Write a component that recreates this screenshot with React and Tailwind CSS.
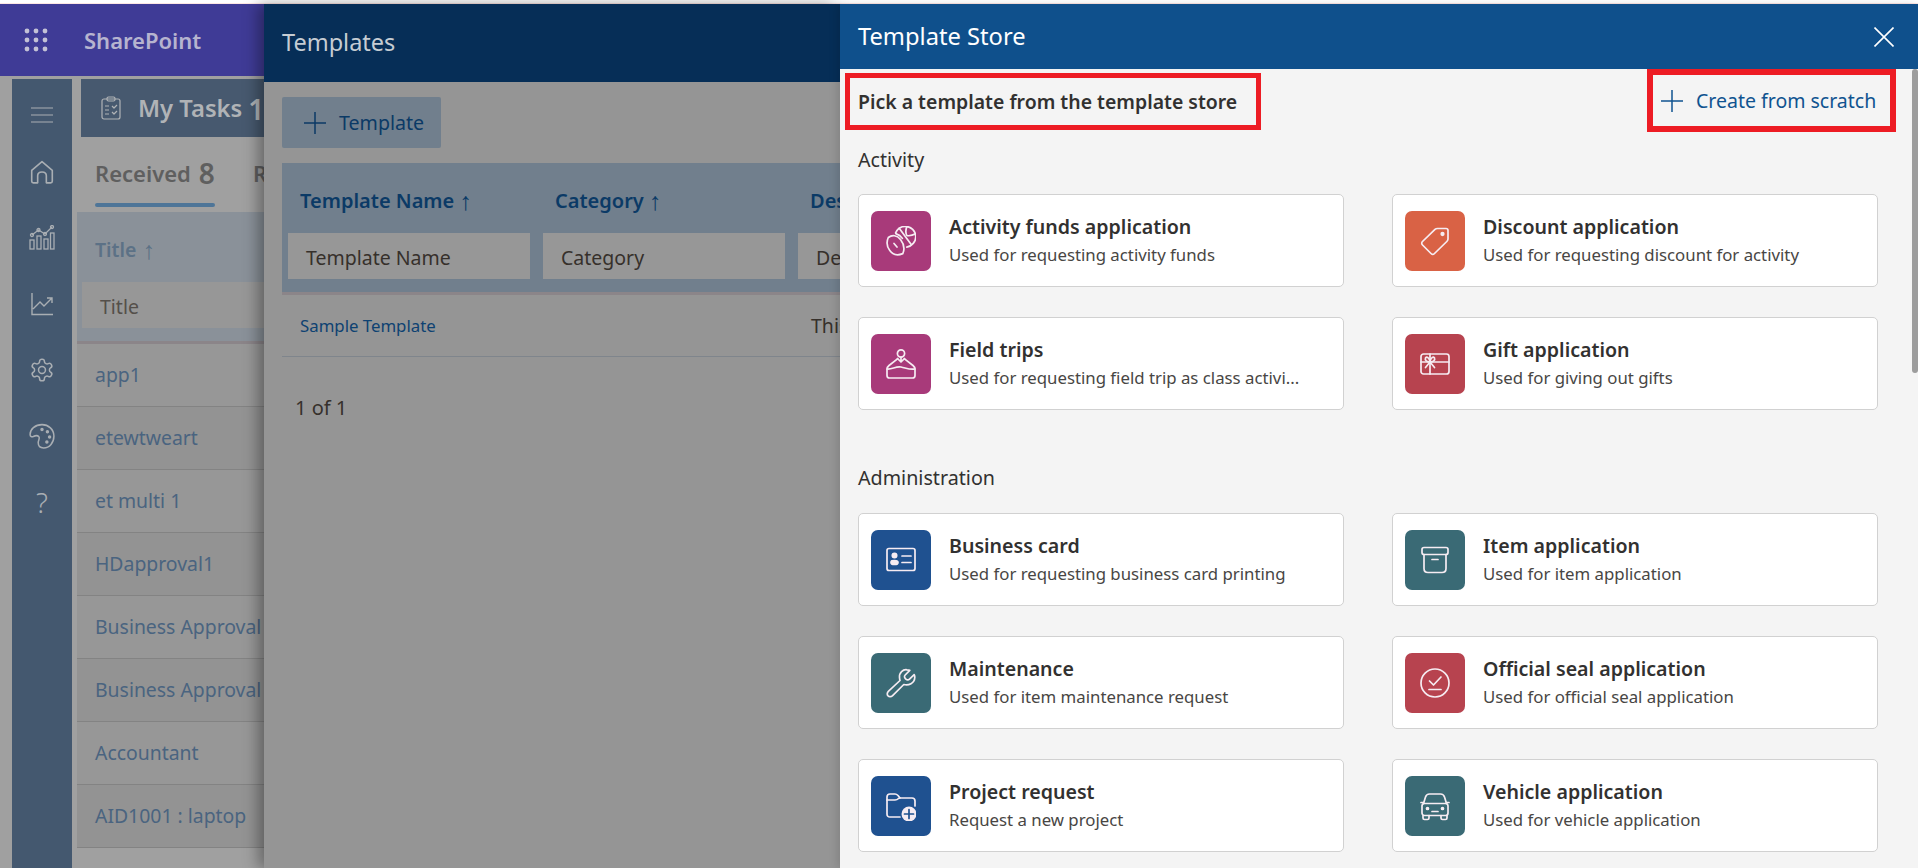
import React from "react";

const S = ({ children, size = 30, vb = "0 0 30 30", sw = 1.7, className = "" }) => (
  <svg width={size} height={size} viewBox={vb} fill="none" stroke="currentColor" strokeWidth={sw} strokeLinecap="round" strokeLinejoin="round" className={className}>
    {children}
  </svg>
);

const icons = {
  sport: (
    <S>
      <path d="M9.6 6.8C11.6 2.8 15.2 .4 19.2 .4C25 .4 29.8 5 29.8 10.8C29.8 15.6 26 20.2 20.8 21.2" />
      <path d="M13.2 2.2L25.4 18.8" />
      <path d="M20.8 .6C19.4 4.4 19.6 7.4 21 9.6C23.6 10 27 9.2 29.4 7.8" />
      <path d="M9.8 7.6C12.6 8.4 15 10.2 16.4 12.4" />
      <path d="M2.3 11.5C6 8.6 11 9 14.5 13.5C18 18 18.6 23.5 16.8 27.6C11.5 29.8 6.6 28.4 3.8 24.5C1 20.8 .5 15.5 2.3 11.5Z" />
      <path d="M8 17.5L11 21" />
    </S>
  ),
  trip: (
    <S>
      <circle cx="15" cy="4.5" r="3.6" />
      <path d="M15 8.2L15 12.5M15 13L11.5 9.5M15 13L18.5 9.5" />
      <path d="M11.5 9.8L3 16.5C1.8 17.5 1 18.5 1 20V26.5C1 28 2 29 3.5 29H26.5C28 29 29 28 29 26.5V20C29 18.5 28.2 17.5 27 16.5L18.5 9.8" />
      <path d="M1.2 20C6 20.5 10 17 15 18C20 19 24 21 28.8 20" />
    </S>
  ),
  tag: (
    <S>
      <path d="M17.5 2.5H26C27 2.5 28 3.5 28 4.5V13C28 14 27.5 14.8 26.8 15.5L14.5 27.5C13.5 28.5 12 28.5 11 27.5L2.5 19C1.5 18 1.5 16.5 2.5 15.5L15 3.3C15.6 2.8 16.5 2.5 17.5 2.5Z" />
      <circle cx="22.5" cy="8" r="1.3" fill="currentColor" />
    </S>
  ),
  gift: (
    <S>
      <rect x="1" y="5" width="28" height="20" rx="2.5" />
      <path d="M1 13H29M10 5V25" />
      <path d="M10 13C7 13 4.5 11.5 5.5 9C6.5 7 9.5 8.5 10 13C10.5 8.5 13.5 7 14.5 9C15.5 11.5 13 13 10 13ZM10 13L5.5 18.5M10 13L14.5 18.5" />
    </S>
  ),
  card: (
    <S>
      <rect x="1" y="3.5" width="28" height="22" rx="2" />
      <circle cx="8.5" cy="10.5" r="2.2" fill="currentColor" />
      <path d="M5 17.5C5 15.8 6 15.5 8.5 15.5C11 15.5 12 15.8 12 17.5C12 19.2 11 19.5 8.5 19.5C6 19.5 5 19.2 5 17.5Z" fill="currentColor" />
      <path d="M16 11H25M16 17.5H25" />
    </S>
  ),
  box: (
    <S>
      <rect x="2" y="2.5" width="26" height="7" rx="2" />
      <path d="M4 9.5V23.5C4 26 5.5 27.5 8 27.5H22C24.5 27.5 26 26 26 23.5V9.5" />
      <path d="M12 14.5H18" />
    </S>
  ),
  wrench: (
    <S>
      <path d="M21 1.8C17 1.2 13 4.5 13.5 9.5C13.6 10.8 13.8 11.8 14 12.5L2.6 23.2C.8 25 1 26.8 2 27.8C3 28.9 5 29.2 6.6 27.6L17.8 16.5C22.5 17.8 28.6 15.4 28.8 9.2C28.8 8.2 28.6 7.4 28.2 6.6L23.5 11.2C22.2 12.4 20.8 12 19.6 10.8C18.4 9.6 18 8.2 19.2 7L23.8 2.4C23 2.1 22 1.9 21 1.8Z" />
    </S>
  ),
  seal: (
    <S>
      <circle cx="15" cy="15" r="14" />
      <path d="M9.5 13L13.5 17L21 9M9 21.5H21" />
    </S>
  ),
  folder: (
    <S>
      <path d="M14 26H4C2 26 1 25 1 23V6C1 4 2 3 4 3H9C10.5 3 11 3.5 12 4.5L14 7H26C28 7 29 8 29 10V15" />
      <path d="M1 9H9C10.5 9 11.5 8.5 12.5 7.5L14 7" />
      <circle cx="23" cy="23" r="7.5" fill="currentColor" stroke="none" />
      <path d="M23 18.5V27.5M18.5 23H27.5" stroke="#1f5190" />
    </S>
  ),
  car: (
    <S>
      <path d="M3.5 12.5L5.5 6C6.2 3.8 7.5 3 9.5 3H20.5C22.5 3 23.8 3.8 24.5 6L26.5 12.5" />
      <rect x="2" y="12.5" width="26" height="12" rx="2.5" />
      <path d="M1 11.5H3.5M26.5 11.5H29M3 24.5V27C3 28 3.5 28.5 4.5 28.5H7.5C8.5 28.5 9 28 9 27V24.5M21 24.5V27C21 28 21.5 28.5 22.5 28.5H25.5C26.5 28.5 27 28 27 27V24.5M12 20.5H18" />
      <circle cx="7.5" cy="17.5" r="1" fill="currentColor" />
      <circle cx="22.5" cy="17.5" r="1" fill="currentColor" />
    </S>
  ),
};

const Card = ({ icon, color, title, sub }) => (
  <div className="h-[93px] flex items-center pl-[12px] bg-white border border-[#d1d1d1] rounded-[5px]">
    <div className={`w-[60px] h-[60px] rounded-[7px] flex items-center justify-center text-[#f6ecf2] ${color}`}>{icons[icon]}</div>
    <div className="ml-[18px] flex flex-col">
      <div className="text-[19.6px] leading-[28px] font-semibold text-[#323130]">{title}</div>
      <div className="text-[16.8px] leading-[28px] text-[#484644]">{sub}</div>
    </div>
  </div>
);

const Grid = ({ children }) => <div className="grid grid-cols-[486px_486px] gap-x-[48px] gap-y-[30px] ml-[18px]">{children}</div>;

const rows = ["app1", "etewtweart", "et multi 1", "HDapproval1", "Business Approval", "Business Approval", "Accountant", "AID1001 : laptop"];

const NavItem = ({ children }) => <div className="h-[66px] flex items-center justify-center">{children}</div>;

export default function App() {
  return (
    <div className="h-[868px] w-[1918px] overflow-hidden flex flex-col bg-white font-['Noto_Sans',sans-serif]">
      <div className="h-[4px] shrink-0 bg-white border-b border-[#fde6e4]" />
      <div className="flex-1 min-h-0 flex">
        {/* SharePoint page behind */}
        <div className="w-[264px] shrink-0 overflow-hidden flex flex-col bg-[#a0a0a0]">
          <div className="h-[72px] shrink-0 bg-[#3f3b96] flex items-center pl-[24px]">
            <svg width="24" height="24" viewBox="0 0 24 24" fill="#c3c1d6">
              {[3, 12, 21].map((y) => [3, 12, 21].map((x) => <circle key={`${x}-${y}`} cx={x} cy={y} r="2.4" />))}
            </svg>
            <span className="ml-[36px] text-[22px] font-semibold text-[#b6b4cf]">SharePoint</span>
          </div>
          <div className="flex-1 min-h-0 flex pt-[3px] pl-[12px]">
            <div className="w-[60px] shrink-0 bg-[#44586f] text-[#a9aeb3] flex flex-col items-center pt-[24px]">
              <div className="h-[24px] flex items-center">
                <svg width="24" height="18" viewBox="0 0 24 18" stroke="currentColor" strokeWidth="1.2"><path d="M1 2H23M1 9H23M1 16H23" /></svg>
              </div>
              <div className="mt-[12px] w-full">
                <NavItem>
                  <svg width="26" height="26" viewBox="0 0 24 24" fill="none" stroke="currentColor" strokeWidth="1.5" strokeLinejoin="round">
                    <path d="M2.5 10.5L12 2.5L21.5 10.5V20.5C21.5 21.5 21 22 20 22H16V15.5C16 13.5 14.5 12 12 12C9.5 12 8 13.5 8 15.5V22H4C3 22 2.5 21.5 2.5 20.5Z" />
                  </svg>
                </NavItem>
                <NavItem>
                  <svg width="26" height="26" viewBox="0 0 26 26" fill="none" stroke="currentColor" strokeWidth="1.3">
                    <rect x="1" y="15" width="4" height="9" />
                    <rect x="8" y="11" width="4" height="13" />
                    <rect x="15" y="14" width="4" height="10" />
                    <rect x="21.5" y="8" width="3.5" height="16" />
                    <path d="M3 10L9.5 5L16 9L23 2" />
                    <circle cx="3" cy="10" r="1.5" />
                    <circle cx="9.5" cy="5" r="1.5" />
                    <circle cx="16" cy="9" r="1.5" />
                    <circle cx="23" cy="2" r="1.5" />
                  </svg>
                </NavItem>
                <NavItem>
                  <svg width="24" height="24" viewBox="0 0 24 24" fill="none" stroke="currentColor" strokeWidth="1.4">
                    <path d="M2 1V22.5H23M3 17L10 10L14 14L22 6M17 6H22V11" />
                  </svg>
                </NavItem>
                <NavItem>
                  <svg width="26" height="26" viewBox="0 0 24 24" fill="none" stroke="currentColor" strokeWidth="1.4" strokeLinejoin="round">
                    <path d="M12.22 2h-.44a2 2 0 0 0-2 2v.18a2 2 0 0 1-1 1.73l-.43.25a2 2 0 0 1-2 0l-.15-.08a2 2 0 0 0-2.73.73l-.22.38a2 2 0 0 0 .73 2.73l.15.1a2 2 0 0 1 1 1.72v.51a2 2 0 0 1-1 1.74l-.15.09a2 2 0 0 0-.73 2.73l.22.38a2 2 0 0 0 2.73.73l.15-.08a2 2 0 0 1 2 0l.43.25a2 2 0 0 1 1 1.73V20a2 2 0 0 0 2 2h.44a2 2 0 0 0 2-2v-.18a2 2 0 0 1 1-1.73l.43-.25a2 2 0 0 1 2 0l.15.08a2 2 0 0 0 2.73-.73l.22-.39a2 2 0 0 0-.73-2.73l-.15-.08a2 2 0 0 1-1-1.74v-.5a2 2 0 0 1 1-1.74l.15-.09a2 2 0 0 0 .73-2.73l-.22-.38a2 2 0 0 0-2.73-.73l-.15.08a2 2 0 0 1-2 0l-.43-.25a2 2 0 0 1-1-1.73V4a2 2 0 0 0-2-2z" />
                    <circle cx="12" cy="12" r="3.2" />
                  </svg>
                </NavItem>
                <NavItem>
                  <svg width="26" height="26" viewBox="0 0 24 24" fill="none" stroke="currentColor" strokeWidth="1.4" strokeLinejoin="round">
                    <path d="M12 1.5C5.5 1.5 1 6 1 10.5C1 12.5 2.5 13 4 12.5C6 11.5 8 11.5 9 12.5C10.5 14 8.5 15.5 8.5 18C8.5 21 10.5 23 13.5 23C19 23 23 18 23 12C23 6 18 1.5 12 1.5Z" />
                    <circle cx="12" cy="6" r=".9" fill="currentColor" />
                    <circle cx="17" cy="8" r=".9" fill="currentColor" />
                    <circle cx="19" cy="13" r=".9" fill="currentColor" />
                    <circle cx="16.5" cy="17.5" r=".9" fill="currentColor" />
                  </svg>
                </NavItem>
                <NavItem>
                  <span className="text-[28px] font-light leading-none">?</span>
                </NavItem>
              </div>
            </div>
            <div className="flex-1 min-w-0 ml-[5px] flex flex-col">
              <div className="ml-[4px] h-[58px] pt-[2px] shrink-0 bg-[#47596f] flex items-center pl-[20px] text-[#b0b3b6] whitespace-nowrap">
                <svg width="20" height="24" viewBox="0 0 20 24" fill="none" stroke="currentColor" strokeWidth="1.2" strokeLinejoin="round" className="shrink-0 mb-[2px]">
                  <rect x="1" y="3" width="18" height="20" rx="2" />
                  <rect x="6" y="1" width="8" height="4" rx="1.5" />
                  <path d="M4 10H8M4 14H8M4 18H8M11 10L13 12L16 9M11 16L13 18L16 15" />
                </svg>
                <span className="ml-[17px] text-[23.8px] font-semibold">My Tasks</span>
                <span className="ml-[6px] text-[28px] font-semibold">1</span>
              </div>
              <div className="h-[75px] shrink-0 flex flex-col pl-[18px]">
                <div className="h-[66px] pt-[6px] flex items-center whitespace-nowrap text-[#5f5f5f]">
                  <span className="text-[22px] font-semibold">Received</span>
                  <span className="ml-[8px] text-[28px] font-semibold">8</span>
                  <span className="ml-[38px] text-[22px] font-semibold">R</span>
                </div>
                <div className="h-[4px] w-[120px] rounded-full bg-[#4e7598]" />
              </div>
              <div className="h-[132px] shrink-0 bg-[#8a9199] border-b-[3px] border-[#8b8589] flex flex-col">
                <div className="h-[70px] pt-[5px] flex items-center pl-[18px] text-[19.5px] font-semibold text-[#5c7186] shrink-0">
                  Title <span className="ml-[6px] font-light text-[25px] leading-none">↑</span>
                </div>
                <div className="ml-[5px] h-[46px] pt-[3px] bg-[#979797] flex items-center pl-[18px] text-[19.5px] text-[#544f4a]">Title</div>
              </div>
              {rows.map((r, i) => (
                <div key={i} className={`h-[63px] shrink-0 border-b border-[#838383] flex items-center pl-[18px] text-[19.4px] text-[#4a6480] whitespace-nowrap ${i % 2 === 1 ? "bg-[#939393]" : "bg-[#979797]"}`}>{r}</div>
              ))}
            </div>
          </div>
        </div>

        {/* Templates panel */}
        <div className="relative z-10 w-[576px] shrink-0 overflow-hidden flex flex-col bg-[#959595] shadow-[-6px_0_14px_rgba(0,0,0,0.35)]">
          <div className="h-[78px] shrink-0 bg-[#062e57] flex items-center pl-[18px] text-[23.5px] text-[#c5ccd3]">Templates</div>
          <div className="flex-1 pl-[18px] flex flex-col">
            <div className="mt-[15px] w-[159px] h-[51px] bg-[#717f8d] rounded-[2px] flex items-center pl-[22px] text-[#0b3a66]">
              <svg width="22" height="22" viewBox="0 0 22 22" stroke="currentColor" strokeWidth="1.5"><path d="M11 0V22M0 11H22" /></svg>
              <span className="ml-[13px] text-[19.6px]">Template</span>
            </div>
            <div className="mt-[15px] w-[600px] h-[132px] shrink-0 bg-[#717f8d] border-b-[3px] border-[#8b8589] grid grid-cols-[255px_255px_255px] grid-rows-[70px_46px]">
              {["Template Name", "Category", "Description"].map((h, i) => (
                <div key={h} className="pl-[18px] pt-[5px] flex items-center text-[20px] font-semibold text-[#0b3a66] whitespace-nowrap">
                  {h}
                  {i < 2 && <span className="ml-[5px] font-light text-[25px] leading-none">↑</span>}
                </div>
              ))}
              {["Template Name", "Category", "Description"].map((h) => (
                <div key={h} className="ml-[6px] mr-[7px] pt-[3px] bg-[#979797] flex items-center pl-[18px] text-[19.5px] text-[#36302b] whitespace-nowrap">{h}</div>
              ))}
            </div>
            <div className="h-[62px] w-[600px] shrink-0 border-b border-[#7f858c] grid grid-cols-[510px_255px] items-center">
              <span className="pl-[18px] text-[16.8px] text-[#0e4272]">Sample Template</span>
              <span className="pl-[19px] text-[19.5px] text-[#36302b] whitespace-nowrap">This</span>
            </div>
            <div className="mt-[36px] pl-[13px] text-[20px] text-[#36302b]">1 of 1</div>
          </div>
        </div>

        {/* Template Store */}
        <div className="relative z-20 flex-1 min-w-0 flex flex-col bg-[#f4f4f4] shadow-[-3px_0_8px_rgba(0,0,0,0.12)]">
          <div className="h-[65px] shrink-0 bg-[#0f508c] flex items-center justify-between pl-[18px] pr-[24px] text-white">
            <span className="text-[23.7px]">Template Store</span>
            <svg width="20" height="20" viewBox="0 0 20 20" stroke="currentColor" strokeWidth="1.6"><path d="M0.5 0.5L19.5 19.5M19.5 0.5L0.5 19.5" /></svg>
          </div>
          <div className="relative flex-1 min-h-0 flex flex-col">
            <div className="absolute right-0 top-0 w-[6px] h-[304px] rounded-[3px] bg-[#9d9d9d]" />
            <div className="h-[63px] shrink-0 flex justify-between items-start pr-[22px]">
              <div className="mt-[4px] ml-[5px] w-[416px] h-[57px] border-[5px] border-[#ed1c24] flex items-center pl-[8px] text-[19.45px] font-semibold text-[#323130] whitespace-nowrap">
                <span className="pt-[1px]">Pick a template from the template store</span>
              </div>
              <div className="w-[249px] h-[63px] border-[6px] border-[#ed1c24] flex items-center pl-[8px] text-[#0f5390] whitespace-nowrap">
                <svg width="22" height="22" viewBox="0 0 22 22" stroke="currentColor" strokeWidth="1.5"><path d="M11 0V22M0 11H22" /></svg>
                <span className="ml-[13px] text-[19.5px]">Create from scratch</span>
              </div>
            </div>
            <div className="h-[62px] shrink-0 pb-[7px] flex items-center pl-[18px] text-[19.6px] text-[#323130]">Activity</div>
            <Grid>
              <Card icon="sport" color="bg-[#a83a7a]" title="Activity funds application" sub="Used for requesting activity funds" />
              <Card icon="tag" color="bg-[#d96245]" title="Discount application" sub="Used for requesting discount for activity" />
              <Card icon="trip" color="bg-[#a83a7a]" title="Field trips" sub="Used for requesting field trip as class activi..." />
              <Card icon="gift" color="bg-[#b7434f]" title="Gift application" sub="Used for giving out gifts" />
            </Grid>
            <div className="h-[103px] shrink-0 flex items-center pl-[18px] pt-[33px] text-[19.7px] text-[#323130]">Administration</div>
            <Grid>
              <Card icon="card" color="bg-[#1f5190]" title="Business card" sub="Used for requesting business card printing" />
              <Card icon="box" color="bg-[#3a6a75]" title="Item application" sub="Used for item application" />
              <Card icon="wrench" color="bg-[#3a6a75]" title="Maintenance" sub="Used for item maintenance request" />
              <Card icon="seal" color="bg-[#b7434f]" title="Official seal application" sub="Used for official seal application" />
              <Card icon="folder" color="bg-[#1f5190]" title="Project request" sub="Request a new project" />
              <Card icon="car" color="bg-[#3a6a75]" title="Vehicle application" sub="Used for vehicle application" />
            </Grid>
          </div>
        </div>
      </div>
    </div>
  );
}
